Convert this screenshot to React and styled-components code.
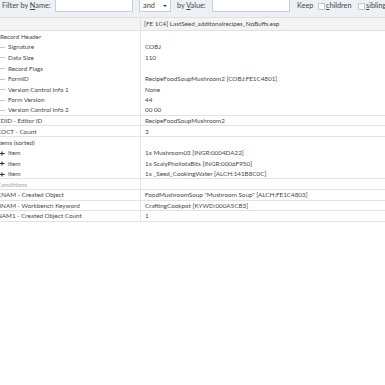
import React from 'react';
import styled, { createGlobalStyle } from 'styled-components';

const GlobalStyle = createGlobalStyle`
  html, body {
    margin: 0;
    padding: 0;
    background: #ffffff;
    overflow: hidden;
  }
  body {
    font-family: Lato, "Open Sans", sans-serif;
    font-size: 7.3px;
    color: #474747;
  }
`;

const Page = styled.div`
  width: 385px;
  height: 385px;
  display: flex;
  flex-direction: column;
`;

const Toolbar = styled.div`
  height: 17px;
  background: #edf0f4;
  border-bottom: 1px solid #dde1e6;
  display: flex;
  align-items: flex-start;
  padding-left: 2px;
  white-space: nowrap;
`;

const Label = styled.span`
  flex: none;
  width: ${(p) => p.$w}px;
  line-height: 12px;
  color: #474747;
`;

const TextBox = styled.div`
  flex: none;
  width: ${(p) => p.$w}px;
  height: 12px;
  background: #fff;
  border: 1px solid #c9ced5;
  border-top: none;
  box-sizing: border-box;
  margin-right: ${(p) => p.$mr || 0}px;
`;

const Select = styled.div`
  flex: none;
  width: 32px;
  height: 12px;
  background: #fff;
  border: 1px solid #c9ced5;
  border-top: none;
  box-sizing: border-box;
  display: flex;
  align-items: center;
  justify-content: space-between;
  padding: 0 3px 0 3px;
  margin-right: 6px;
  line-height: 11px;
`;

const Arrow = styled.span`
  width: 0;
  height: 0;
  border-left: 2px solid transparent;
  border-right: 2px solid transparent;
  border-top: 2px solid #444;
`;

const Check = styled.span`
  flex: none;
  width: 7px;
  height: 7px;
  background: #fff;
  border: 1px solid #c3c8ce;
  box-sizing: border-box;
  margin: 3px 1px 0 0;
`;

const Header = styled.div`
  height: 12px;
  background: #f4f4f4;
  border-bottom: 1px solid #e1e1e1;
  display: grid;
  grid-template-columns: 140px 1fr;
  font-size: 6.3px;
`;

const HeaderCell = styled.div`
  line-height: 12px;
  padding-left: 3px;
  border-left: ${(p) => (p.$first ? 'none' : '1px solid #e1e1e1')};
  white-space: nowrap;
`;

const Body = styled.div`
  display: flex;
  flex-direction: column;
  font-size: 6.3px;
`;

const Row = styled.div`
  display: grid;
  grid-template-columns: 140px 1fr;
  height: 10.6px;
  box-sizing: border-box;
  border-bottom: ${(p) => (p.$line ? '1px solid #e3e3e3' : 'none')};
`;

const NameCell = styled.div`
  display: flex;
  align-items: center;
  white-space: nowrap;
  overflow: hidden;
  margin-left: -3px;
  padding-left: ${(p) => p.$indent}px;
  color: ${(p) => (p.$muted ? '#a8a8a8' : '#474747')};
`;

const ValueCell = styled.div`
  display: flex;
  align-items: center;
  white-space: nowrap;
  overflow: hidden;
  padding-left: 4px;
  border-left: 1px solid #e6e6e6;
`;

const Branch = styled.svg`
  width: 7px;
  height: 10px;
  flex: none;
  margin-right: 2px;
`;

const TreeTick = ({ dark }) => (
  <Branch viewBox="0 0 7 10">
    <line x1="0" y1="5.5" x2="6" y2="5.5" stroke="#b5b5b5" strokeWidth="0.8" />
    {dark && (
      <g stroke="#333" strokeWidth="1.1">
        <line x1="3" y1="3.5" x2="3" y2="7.5" />
        <line x1="1" y1="5.5" x2="5.5" y2="5.5" />
      </g>
    )}
  </Branch>
);

const rows = [
  { name: 'Record Header', value: '', indent: 3 },
  { name: 'Signature', value: 'COBJ', child: true },
  { name: 'Data Size', value: '110', child: true },
  { name: 'Record Flags', value: '', child: true },
  { name: 'FormID', value: 'RecipeFoodSoupMushroom2 [COBJ:FE1C4801]', child: true },
  { name: 'Version Control Info 1', value: 'None', child: true },
  { name: 'Form Version', value: '44', child: true },
  { name: 'Version Control Info 2', value: '00 00', child: true, line: true },
  { name: 'EDID - Editor ID', value: 'RecipeFoodSoupMushroom2', indent: 0, line: true },
  { name: 'COCT - Count', value: '3', indent: 0, line: true },
  { name: 'Items (sorted)', value: '', indent: 0 },
  { name: 'Item', value: '1x Mushroom03 [INGR:0004DA22]', item: true },
  { name: 'Item', value: '1x ScalyPholiotaBits [INGR:0006F950]', item: true },
  { name: 'Item', value: '1x _Seed_CookingWater [ALCH:141B8C0C]', item: true, line: true },
  { name: 'Conditions', value: '', indent: 0, muted: true, line: true },
  { name: 'CNAM - Created Object', value: 'FoodMushroomSoup "Mushroom Soup" [ALCH:FE1C4803]', indent: 0, line: true },
  { name: 'BNAM - Workbench Keyword', value: 'CraftingCookpot [KYWD:000A5CB3]', indent: 0, line: true },
  { name: 'NAM1 - Created Object Count', value: '1', indent: 0, line: true },
];

export default function App() {
  return (
    <Page>
      <GlobalStyle />
      <Toolbar>
        <Label $w={53}>Filter by <u>N</u>ame:</Label>
        <TextBox $w={78} $mr={6} />
        <Select>
          <span>and</span>
          <Arrow />
        </Select>
        <Label $w={35}>by <u>V</u>alue:</Label>
        <TextBox $w={78} $mr={7} />
        <Label $w={21}>Keep</Label>
        <Check />
        <Label $w={32}><u>c</u>hildren</Label>
        <Check />
        <Label><u>s</u>iblings</Label>
      </Toolbar>
      <Header>
        <HeaderCell $first />
        <HeaderCell>[FE 1C4] LastSeed_additonalrecipes_NoBuffs.esp</HeaderCell>
      </Header>
      <Body>
        {rows.map((r, i) => (
          <Row key={i} $line={r.line}>
            <NameCell $indent={r.child || r.item ? 2 : r.indent} $muted={r.muted}>
              {(r.child || r.item) && <TreeTick dark={r.item} />}
              {r.name}
            </NameCell>
            <ValueCell>{r.value}</ValueCell>
          </Row>
        ))}
      </Body>
    </Page>
  );
}
